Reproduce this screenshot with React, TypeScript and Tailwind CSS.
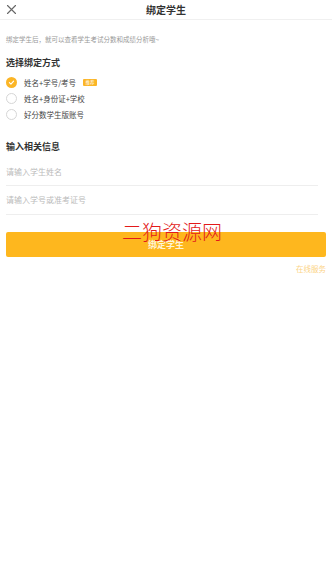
import React from "react";

const font = { fontFamily: '"Noto Sans CJK SC", "Noto Sans", sans-serif' };

function Radio({ checked }: { checked?: boolean }) {
  if (checked) {
    return (
      <span className="flex h-[11px] w-[11px] items-center justify-center rounded-full bg-[#fbb526]">
        <svg width="7" height="7" viewBox="0 0 10 10">
          <path d="M2 5.2 L4.2 7.3 L8 3" fill="none" stroke="#fff" strokeWidth="1.6" strokeLinecap="round" strokeLinejoin="round" />
        </svg>
      </span>
    );
  }
  return <span className="h-[11px] w-[11px] rounded-full border border-[#d6d6d6] bg-white" />;
}

export default function App() {
  return (
    <div className="relative h-[579px] w-[332px] overflow-hidden bg-white text-[#333]" style={font}>
      {/* header */}
      <div className="relative flex h-[20px] items-center justify-center border-b border-[#f0f0f0]">
        <svg className="absolute left-[6px] top-[4px]" width="11" height="11" viewBox="0 0 11 11">
          <path d="M1.5 1.5 L9.5 9.5 M9.5 1.5 L1.5 9.5" stroke="#666" strokeWidth="1.1" strokeLinecap="round" />
        </svg>
        <span className="text-[10px] font-bold leading-none text-[#333]">绑定学生</span>
      </div>

      <div className="px-[6px]">
        <p className="mt-[15px] text-[6.5px] leading-[8px] text-[#999]">绑定学生后，就可以查看学生考试分数和成绩分析哦~</p>

        <h2 className="mt-[15px] text-[9px] font-bold leading-[10px] text-[#333]">选择绑定方式</h2>

        <div className="mt-[9px] flex flex-col gap-[5px]">
          <div className="flex h-[11px] items-center">
            <Radio checked />
            <span className="ml-[7px] text-[7.5px] leading-none text-[#444]">姓名+学号/考号</span>
            <span className="ml-[7px] flex h-[7px] items-center rounded-[1px] bg-[#fbb526] px-[2.5px] text-[4.5px] leading-none text-white">推荐</span>
          </div>
          <div className="flex h-[11px] items-center">
            <Radio />
            <span className="ml-[7px] text-[7.5px] leading-none text-[#444]">姓名+身份证+学校</span>
          </div>
          <div className="flex h-[11px] items-center">
            <Radio />
            <span className="ml-[7px] text-[7.5px] leading-none text-[#444]">好分数学生版账号</span>
          </div>
        </div>

        <h2 className="mt-[22px] text-[9px] font-bold leading-[10px] text-[#333]">输入相关信息</h2>

        <div className="mr-[8px] mt-[7px] flex h-[27px] items-center border-b border-[#eeeeee]">
          <span className="text-[8px] leading-none text-[#bbb]">请输入学生姓名</span>
        </div>
        <div className="mr-[8px] flex h-[29px] items-center border-b border-[#eeeeee]">
          <span className="text-[8px] leading-none text-[#bbb]">请输入学号或准考证号</span>
        </div>

        <button className="mt-[17px] flex h-[25px] w-full items-center justify-center rounded-[2px] bg-[#feb71e] text-[9px] font-bold text-[#fff3d6]">
          绑定学生
        </button>

        <div className="mt-[8px] flex justify-end">
          <span className="text-[7.5px] leading-none text-[#fcd488]">在线服务</span>
        </div>
      </div>

      <div className="pointer-events-none absolute left-[122px] top-[222px] text-[20px] leading-none text-[#e31a1a]" style={{ fontFamily: '"Noto Sans CJK SC", sans-serif', fontWeight: 300 }}>
        二狗资源网
      </div>
    </div>
  );
}
